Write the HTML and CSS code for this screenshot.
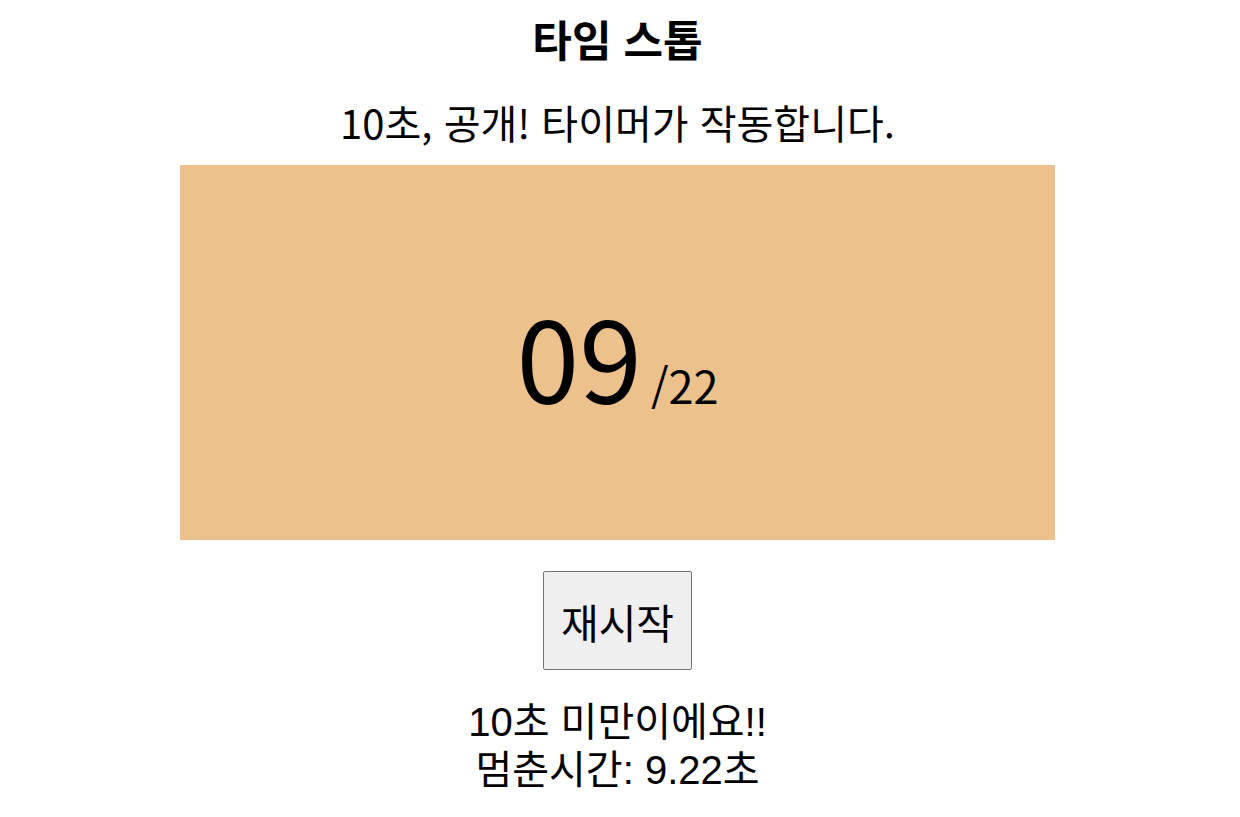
FILE: index.html
```html
<!DOCTYPE html>
<html lang="ko">
<head>
<meta charset="utf-8">
<title>타임 스톱</title>
<link rel="stylesheet" href="styles.css">
</head>
<body>
<main class="app">
  <h1 class="title">타임 스톱</h1>
  <p class="subtitle">10초, 공개! 타이머가 작동합니다.</p>
  <div class="timer">
    <div class="readout"><span class="sec">09</span><span class="ms">/22</span></div>
  </div>
  <button class="restart" type="button">재시작</button>
  <div class="result">
    <p class="line">10초 미만이에요!!</p>
    <p class="line">멈춘시간: 9.22초</p>
  </div>
</main>
</body>
</html>
```
FILE: styles.css
```css
html, body {
  margin: 0;
  padding: 0;
  background: #ffffff;
}
body {
  font-family: "Noto Sans CJK KR", "Noto Sans", sans-serif;
  color: #000;
}
.app {
  display: flex;
  flex-direction: column;
  align-items: center;
  padding-right: 5px;
}
.title {
  margin: 14px 0 0;
  font-size: 43px;
  font-weight: 700;
  line-height: 48px;
}
.subtitle {
  margin: 36px 0 0;
  font-size: 40px;
  line-height: 48px;
}
.timer {
  margin-top: 19px;
  width: 875px;
  height: 375px;
  background: #ecc18c;
  display: flex;
  justify-content: center;
  align-items: center;
}
.readout {
  display: flex;
  align-items: baseline;
  margin-top: 6px;
}
.sec {
  font-size: 113px;
  line-height: 1;
}
.ms {
  font-size: 45px;
  line-height: 1;
  margin-left: 9px;
}
.restart {
  margin-top: 31px;
  width: 149px;
  height: 99px;
  font-family: inherit;
  font-size: 41px;
  background: #efefef;
  border: 1px solid #767676;
  border-radius: 2px;
  color: #000;
  padding: 0;
}
.result {
  margin-top: 28px;
  text-align: center;
}
.line {
  margin: 0;
  font-family: "Liberation Sans", "Noto Sans CJK KR", sans-serif;
  font-size: 40px;
  line-height: 48px;
}
```
